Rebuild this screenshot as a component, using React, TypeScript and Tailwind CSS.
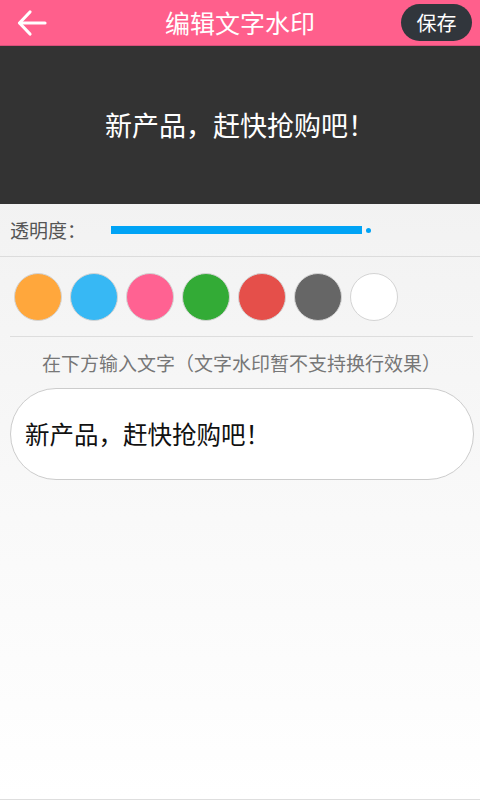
import React from 'react'

const swatches = ['#ffa73c', '#37b8f4', '#ff6292', '#33ab36', '#e54f4a', '#666666', '#ffffff']

const watermark = '新产品，赶快抢购吧！'

function BackArrow() {
  return (
    <svg width="30" height="28" viewBox="0 0 30 28" fill="none" stroke="white" strokeWidth="3.2" strokeLinecap="round" strokeLinejoin="round">
      <path d="M28 14H3" />
      <path d="M13 3L2.5 14L13 25" />
    </svg>
  )
}

export default function App() {
  return (
    <div className="flex h-[800px] w-[480px] flex-col border-b border-[#dedede] bg-gradient-to-b from-[#eeeeee] to-white font-['Noto_Sans_CJK_SC','Noto_Sans',sans-serif]">
      <header className="grid h-[46px] grid-cols-[1fr_auto_1fr] items-center border-b border-[#d9507a] bg-[#ff5f8c]">
        <div className="flex items-center pl-[17px] pt-[1px]">
          <BackArrow />
        </div>
        <h1 className="text-[25px] leading-none text-white">编辑文字水印</h1>
        <div className="flex justify-end pr-[8px]">
          <button className="flex h-[37px] w-[71px] items-center justify-center rounded-full bg-[#31363c] text-[20px] leading-none text-white">
            保存
          </button>
        </div>
      </header>

      <div className="flex h-[158px] items-center justify-center bg-[#333333] text-[27px] text-white">
        {watermark}
      </div>

      <div className="flex h-[53px] items-center border-b border-[#dcdcdc] pl-[10px]">
        <span className="w-[101px] text-[19px] text-[#555555]">透明度：</span>
        <div className="h-[8px] w-[251px] bg-[#00a3f5]" />
        <div className="ml-[4px] h-[5px] w-[5px] rounded-full bg-[#00a3f5]" />
      </div>

      <div className="flex gap-[8px] pb-[15px] pl-[14px] pt-[16px]">
        {swatches.map(color => (
          <div
            key={color}
            className="h-[48px] w-[48px] rounded-full border border-[#d4d4d4]"
            style={{ backgroundColor: color }}
          />
        ))}
      </div>

      <div className="ml-[10px] w-[463px] border-t border-[#dddddd]" />

      <p className="mt-[13px] pl-[3px] text-center text-[19px] leading-[26px] text-[#777777]">
        在下方输入文字（文字水印暂不支持换行效果）
      </p>

      <div className="ml-[10px] mt-[12px] flex h-[92px] w-[464px] items-center rounded-full border border-[#cccccc] bg-white pl-[14px] text-[24.5px] text-[#111111]">
        {watermark}
      </div>
    </div>
  )
}
